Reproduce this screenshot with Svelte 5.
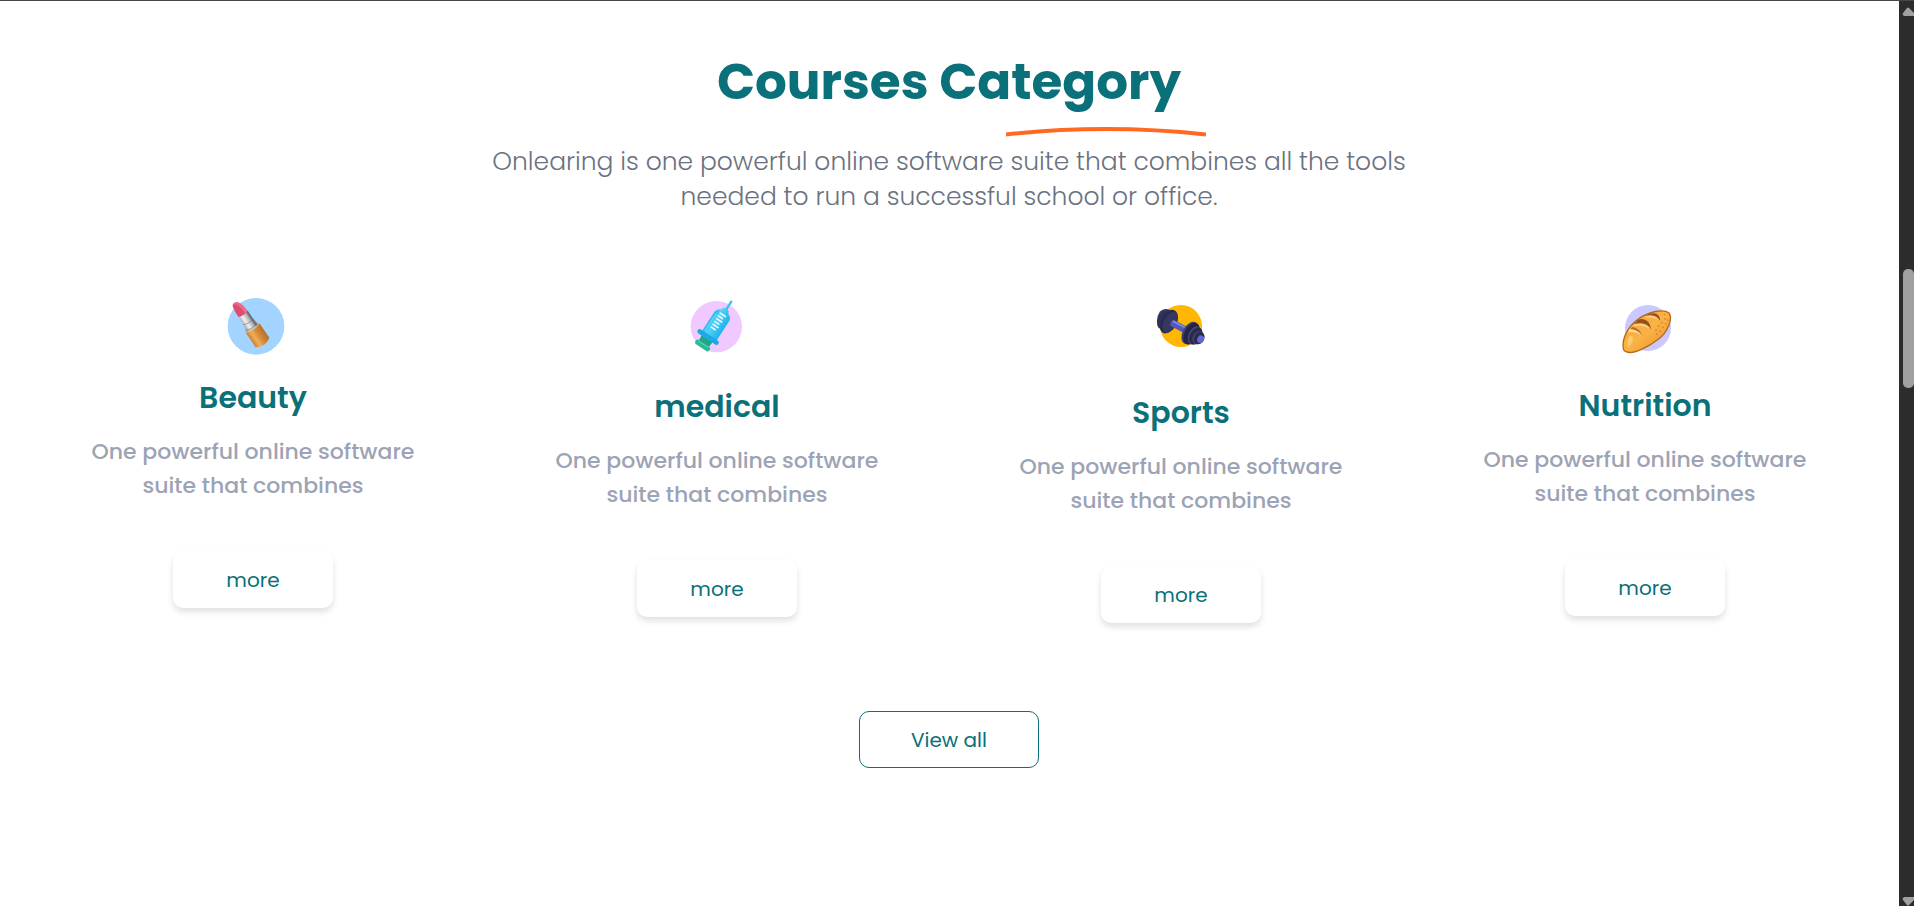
<script>
  const blurb = 'One powerful online software suite that combines';
  const categories = [
    { id: 'beauty', title: 'Beauty', viewBox: '-7 0 270 270', height: 90 },
    { id: 'medical', title: 'medical', viewBox: '5 0 270 297', height: 99 },
    { id: 'sports', title: 'Sports', viewBox: '-13 -15 270 315', height: 105 },
    { id: 'nutrition', title: 'Nutrition', viewBox: '-17 -15 270 294', height: 98 },
  ];
</script>

<div class="page">
  <main>
    <header>
      <h1>Courses Category</h1>
      <svg class="underline" viewBox="0 0 200 10" aria-hidden="true">
        <path d="M0 7.5Q100 -3.5 200 7.5" fill="none" stroke="#ff6a22" stroke-width="4" />
      </svg>
      <p>Onlearing is one powerful online software suite that combines all the tools needed to run a successful school or office.</p>
    </header>

    <section class="grid">
      {#each categories as c (c.id)}
        <article>
          <svg width="90" height={c.height} viewBox={c.viewBox} aria-hidden="true">
            {#if c.id === 'beauty'}
              <defs>
                <linearGradient id="gold" x1="0" x2="1" y1="0" y2="0">
                  <stop offset="0" stop-color="#c98235" /><stop offset=".3" stop-color="#f0ae58" />
                  <stop offset=".6" stop-color="#d48a38" /><stop offset="1" stop-color="#b66e2a" />
                </linearGradient>
                <linearGradient id="silver" x1="0" x2="1" y1="0" y2="0">
                  <stop offset="0" stop-color="#8e9094" /><stop offset=".35" stop-color="#f1f1f1" />
                  <stop offset=".65" stop-color="#b7b7b9" /><stop offset=".85" stop-color="#5f6266" /><stop offset="1" stop-color="#b9bcc2" />
                </linearGradient>
              </defs>
              <circle cx="137" cy="124" r="85" fill="#a3d3ff" />
              <g transform="translate(68 56) rotate(-34)">
                <path d="M-4 4Q3 -5 14 3Q25 14 24 46L-8 46Q-10 20 -4 4Z" fill="#f06a88" />
                <path d="M-4 4Q5 2 10 13Q15 26 14 46L-8 46Q-10 20 -4 4Z" fill="#dd4c74" />
                <path d="M-9 42Q7 50 25 42L25 70L29 94L-14 94L-9 70Z" fill="url(#silver)" />
                <path d="M-9 70Q8 78 25 70M-13 88Q8 97 28 88" fill="none" stroke="#777b80" stroke-width="2" />
                <path d="M-17 92Q8 103 33 92L33 146Q9 163 -17 146Z" fill="url(#gold)" />
                <path d="M-17 93Q8 104 33 93" fill="none" stroke="#f3bd75" stroke-width="2" />
              </g>
            {:else if c.id === 'medical'}
              <defs>
                <linearGradient id="fluid" x1="0" x2="1" y1="0" y2="0">
                  <stop offset="0" stop-color="#22b8ee" /><stop offset=".3" stop-color="#54d2fa" /><stop offset="1" stop-color="#1fb2ee" />
                </linearGradient>
              </defs>
              <circle cx="138" cy="125" r="77" fill="#efc9ff" />
              <g transform="translate(184 47) rotate(33)">
                <rect x="-3" y="0" width="7" height="37" rx="3" fill="#37c3ec" />
                <path d="M-10 32Q0 25 10 32L13 39Q26 43 27 55L27 129L-25 129L-25 55Q-22 43 -12 39Z" fill="url(#fluid)" />
                <path d="M-18 58L-18 121" stroke="#7ee1ff" stroke-width="4" opacity=".6" />
                <path d="M-8 50H10M-8 60H6M-8 70H10M-8 80H6M-8 90H10M-8 100H6" stroke="#e9f9fa" stroke-width="5" stroke-linecap="round" />
                <path d="M-19 135H20L18 158H-17Z" fill="#22a786" />
                <rect x="-37" y="123" width="74" height="14" rx="7" fill="#1ca9e6" />
                <rect x="-25" y="152" width="50" height="16" rx="7" fill="#2bb998" />
                <path d="M-17 156H17" stroke="#59d5b6" stroke-width="3" stroke-linecap="round" />
              </g>
            {:else if c.id === 'sports'}
              <circle cx="122" cy="108" r="63" fill="#ffb703" />
              <g transform="translate(120 111) rotate(28)">
                <path d="M-76 -12Q-72 -28 -52 -31L-46 28Q-62 27 -70 18Q-78 2 -76 -12Z" fill="#3a3b63" />
                <ellipse cx="-53" cy="2" rx="19" ry="31" fill="#303157" />
                <ellipse cx="-38" cy="2" rx="23" ry="38" fill="#292a4d" />
                <ellipse cx="-33" cy="2" rx="19" ry="34" fill="#363760" />
                <path d="M-28 -10H30V11H-28Q-35 0 -28 -10Z" fill="#5458ba" />
                <path d="M-28 -5H26" stroke="#858ae9" stroke-width="5" />
                <ellipse cx="34" cy="2" rx="22" ry="36" fill="#414270" />
                <ellipse cx="39" cy="2" rx="21" ry="35" fill="#242545" />
                <ellipse cx="50" cy="2" rx="19" ry="29" fill="#454675" />
                <ellipse cx="54" cy="2" rx="18" ry="27" fill="#292a4d" />
                <ellipse cx="62" cy="3" rx="16" ry="21" fill="#41426e" />
                <ellipse cx="66" cy="3" rx="15" ry="19" fill="#292a4e" />
                <ellipse cx="71" cy="4" rx="10" ry="12" fill="#6269d2" />
              </g>
            {:else}
              <defs>
                <linearGradient id="crust" x1="0" x2="1" y1="0" y2="1">
                  <stop offset="0" stop-color="#f4a237" /><stop offset=".5" stop-color="#fbb345" /><stop offset="1" stop-color="#e98d25" />
                </linearGradient>
              </defs>
              <circle cx="127" cy="114" r="69" fill="#c9c8ff" />
              <path d="M53 177C48 144 67 109 98 87C128 65 174 55 190 69C203 87 185 127 159 147C128 171 82 195 61 185Q55 183 53 177Z" fill="url(#crust)" stroke="#b36a1d" stroke-width="4" />
              <path d="M75 114Q96 110 111 139Q92 122 66 127Z" fill="#ffdb98" />
              <path d="M79 111Q100 112 112 139Q98 120 74 117Z" fill="#b96b22" />
              <path d="M97 89Q130 80 137 120Q121 99 83 105Z" fill="#985017" />
              <path d="M85 103Q122 92 137 120Q120 104 84 109Z" fill="#ffce7c" />
              <path d="M130 72Q162 62 164 94Q151 77 119 79Z" fill="#985017" />
              <path d="M121 78Q150 70 164 94Q149 81 119 83Z" fill="#ffce7c" />
              <path d="M72 138Q61 153 67 170Q81 163 82 143Q79 135 72 138Z" fill="#ffd07c" opacity=".8" />
              <path d="M177 87h2M167 98h2M180 101h2M158 108h2M171 112h2M150 120h2M163 124h2M152 132h2M176 74h2M186 90h2" stroke="#d4842a" stroke-width="4" stroke-linecap="round" />
            {/if}
          </svg>
          <h2>{c.title}</h2>
          <p>{blurb}</p>
          <button class="more" type="button">more</button>
        </article>
      {/each}
    </section>

    <button class="all" type="button">View all</button>
  </main>

  <div class="scrollbar" aria-hidden="true">
    <svg width="12" height="9" viewBox="0 0 12 9"><path d="M1 8Q0 7 1 6L5 1Q6 0 7 1L12 6V9H2Z" fill="#a0a0a0" /></svg>
    <span class="before"></span>
    <span class="thumb"></span>
    <span class="after"></span>
    <svg width="12" height="9" viewBox="0 0 12 9"><path d="M1 1Q0 2 1 3L5 8Q6 9 7 8L12 3V0H2Z" fill="#a0a0a0" /></svg>
  </div>
</div>

<style>
  :global(body) {
    margin: 0;
    background: #fff;
  }
  .page {
    display: flex;
    min-height: 100vh;
    box-sizing: border-box;
    border-top: 1px solid #47474b;
    font-family: Poppins, Inter, sans-serif;
    color: #0a7079;
  }
  main {
    flex: 1;
    min-width: 0;
    display: flex;
    flex-direction: column;
    align-items: center;
    padding: 48px 22px 48px 21px;
  }
  header {
    position: relative;
    width: 100%;
    text-align: center;
  }
  h1 {
    margin: 0;
    font-size: 50px;
    line-height: 66px;
    font-weight: 700;
  }
  .underline {
    position: absolute;
    top: 78px;
    left: calc(50% + 57px);
    width: 200px;
    height: 10px;
  }
  header p {
    max-width: 940px;
    margin: 29px auto 0;
    font-size: 25px;
    line-height: 35px;
    font-weight: 300;
    color: #6b7280;
  }
  .grid {
    display: grid;
    grid-template-columns: repeat(4, 1fr);
    align-items: start;
    width: 100%;
    margin-top: 71px;
  }
  article {
    display: flex;
    flex-direction: column;
    align-items: center;
    text-align: center;
  }
  h2 {
    margin: 0;
    font-size: 30px;
    line-height: 46px;
    font-weight: 600;
  }
  article p {
    max-width: 350px;
    margin: 14px 0 48px;
    font-size: 22px;
    line-height: 34px;
    font-weight: 500;
    color: #9ca3b4;
  }
  button {
    height: 57px;
    border-radius: 10px;
    background: #fff;
    color: inherit;
    font-family: inherit;
    font-size: 20px;
    cursor: pointer;
  }
  .more {
    width: 160px;
    border: 0;
    box-shadow: 0 4px 6px rgba(0, 0, 0, 0.12);
  }
  .all {
    width: 180px;
    margin-top: 88px;
    border: 1px solid #0a7079;
  }
  .scrollbar {
    display: flex;
    flex-direction: column;
    align-items: flex-end;
    box-sizing: border-box;
    width: 15px;
    padding-top: 6px;
    background: #2c2c2c;
  }
  .before {
    flex: 253;
  }
  .thumb {
    flex: 119;
    width: 11px;
    border-radius: 5px;
    background: #a0a0a0;
  }
  .after {
    flex: 509;
  }
</style>
